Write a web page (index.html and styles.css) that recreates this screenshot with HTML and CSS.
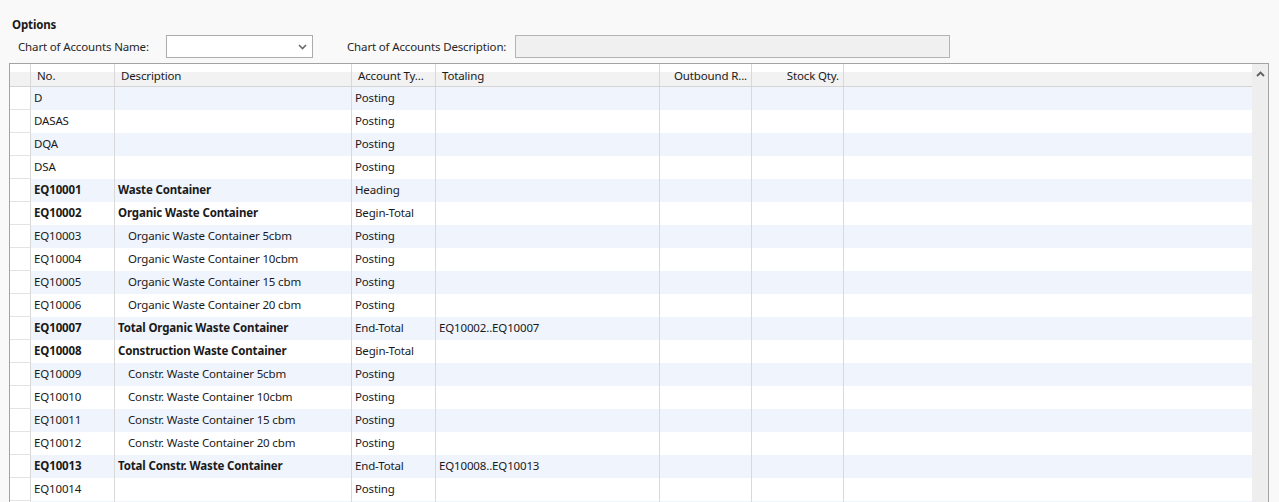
FILE: index.html
```html
<!DOCTYPE html>
<html>
<head>
<meta charset="utf-8">
<link rel="stylesheet" href="styles.css">
</head>
<body>
<div class="options">
  <div class="title">Options</div>
  <div class="form">
    <span class="lbl lbl-name">Chart of Accounts Name:</span>
    <div class="combo"><svg width="9" height="6" viewBox="0 0 9 6"><path d="M1 1 L4.5 4.5 L8 1" fill="none" stroke="#6a6a6a" stroke-width="1.6"/></svg></div>
    <span class="lbl lbl-desc">Chart of Accounts Description:</span>
    <div class="textbox"></div>
  </div>
</div>
<div class="grid">
  <div class="table">
    <div class="row head">
      <div class="cell sel"></div>
      <div class="cell">No.</div>
      <div class="cell">Description</div>
      <div class="cell">Account Ty...</div>
      <div class="cell">Totaling</div>
      <div class="cell num">Outbound R...</div>
      <div class="cell num">Stock Qty.</div>
      <div class="cell last"></div>
    </div>
    <div class="row alt"><div class="cell sel"></div><div class="cell">D</div><div class="cell"></div><div class="cell">Posting</div><div class="cell"></div><div class="cell"></div><div class="cell"></div><div class="cell last"></div></div>
    <div class="row"><div class="cell sel"></div><div class="cell">DASAS</div><div class="cell"></div><div class="cell">Posting</div><div class="cell"></div><div class="cell"></div><div class="cell"></div><div class="cell last"></div></div>
    <div class="row alt"><div class="cell sel"></div><div class="cell">DQA</div><div class="cell"></div><div class="cell">Posting</div><div class="cell"></div><div class="cell"></div><div class="cell"></div><div class="cell last"></div></div>
    <div class="row"><div class="cell sel"></div><div class="cell">DSA</div><div class="cell"></div><div class="cell">Posting</div><div class="cell"></div><div class="cell"></div><div class="cell"></div><div class="cell last"></div></div>
    <div class="row alt bold"><div class="cell sel"></div><div class="cell">EQ10001</div><div class="cell">Waste Container</div><div class="cell">Heading</div><div class="cell"></div><div class="cell"></div><div class="cell"></div><div class="cell last"></div></div>
    <div class="row bold"><div class="cell sel"></div><div class="cell">EQ10002</div><div class="cell">Organic Waste Container</div><div class="cell">Begin-Total</div><div class="cell"></div><div class="cell"></div><div class="cell"></div><div class="cell last"></div></div>
    <div class="row alt"><div class="cell sel"></div><div class="cell">EQ10003</div><div class="cell indent">Organic Waste Container 5cbm</div><div class="cell">Posting</div><div class="cell"></div><div class="cell"></div><div class="cell"></div><div class="cell last"></div></div>
    <div class="row"><div class="cell sel"></div><div class="cell">EQ10004</div><div class="cell indent">Organic Waste Container 10cbm</div><div class="cell">Posting</div><div class="cell"></div><div class="cell"></div><div class="cell"></div><div class="cell last"></div></div>
    <div class="row alt"><div class="cell sel"></div><div class="cell">EQ10005</div><div class="cell indent">Organic Waste Container 15 cbm</div><div class="cell">Posting</div><div class="cell"></div><div class="cell"></div><div class="cell"></div><div class="cell last"></div></div>
    <div class="row"><div class="cell sel"></div><div class="cell">EQ10006</div><div class="cell indent">Organic Waste Container 20 cbm</div><div class="cell">Posting</div><div class="cell"></div><div class="cell"></div><div class="cell"></div><div class="cell last"></div></div>
    <div class="row alt bold"><div class="cell sel"></div><div class="cell">EQ10007</div><div class="cell">Total Organic Waste Container</div><div class="cell">End-Total</div><div class="cell">EQ10002..EQ10007</div><div class="cell"></div><div class="cell"></div><div class="cell last"></div></div>
    <div class="row bold"><div class="cell sel"></div><div class="cell">EQ10008</div><div class="cell">Construction Waste Container</div><div class="cell">Begin-Total</div><div class="cell"></div><div class="cell"></div><div class="cell"></div><div class="cell last"></div></div>
    <div class="row alt"><div class="cell sel"></div><div class="cell">EQ10009</div><div class="cell indent">Constr. Waste Container 5cbm</div><div class="cell">Posting</div><div class="cell"></div><div class="cell"></div><div class="cell"></div><div class="cell last"></div></div>
    <div class="row"><div class="cell sel"></div><div class="cell">EQ10010</div><div class="cell indent">Constr. Waste Container 10cbm</div><div class="cell">Posting</div><div class="cell"></div><div class="cell"></div><div class="cell"></div><div class="cell last"></div></div>
    <div class="row alt"><div class="cell sel"></div><div class="cell">EQ10011</div><div class="cell indent">Constr. Waste Container 15 cbm</div><div class="cell">Posting</div><div class="cell"></div><div class="cell"></div><div class="cell"></div><div class="cell last"></div></div>
    <div class="row"><div class="cell sel"></div><div class="cell">EQ10012</div><div class="cell indent">Constr. Waste Container 20 cbm</div><div class="cell">Posting</div><div class="cell"></div><div class="cell"></div><div class="cell"></div><div class="cell last"></div></div>
    <div class="row alt bold"><div class="cell sel"></div><div class="cell">EQ10013</div><div class="cell">Total Constr. Waste Container</div><div class="cell">End-Total</div><div class="cell">EQ10008..EQ10013</div><div class="cell"></div><div class="cell"></div><div class="cell last"></div></div>
    <div class="row"><div class="cell sel"></div><div class="cell">EQ10014</div><div class="cell"></div><div class="cell">Posting</div><div class="cell"></div><div class="cell"></div><div class="cell"></div><div class="cell last"></div></div>
    <div class="row alt"><div class="cell sel"></div><div class="cell"></div><div class="cell"></div><div class="cell"></div><div class="cell"></div><div class="cell"></div><div class="cell"></div><div class="cell last"></div></div>
  </div>
  <div class="scrollbar"><svg width="9" height="6" viewBox="0 0 9 6"><path d="M1 5 L4.5 1.5 L8 5" fill="none" stroke="#5f5f5f" stroke-width="1.8"/></svg></div>
</div>
</body>
</html>
```

FILE: styles.css
```css
html, body {
  margin: 0;
  padding: 0;
}
body {
  background: #f9f9f9;
  font-family: "Noto Sans", "Open Sans", sans-serif;
  font-size: 11.5px;
  letter-spacing: -0.15px;
  color: #1a1a1a;
  overflow: hidden;
}
.options {
  padding: 17px 0 0 12px;
}
.title {
  font-weight: bold;
  line-height: 15px;
  height: 15px;
}
.form {
  display: flex;
  align-items: center;
  height: 23px;
  margin-top: 3px;
  padding-left: 6px;
}
.lbl {
  white-space: nowrap;
  color: #262626;
}
.lbl-name {
  width: 148px;
}
.combo {
  width: 147px;
  height: 23px;
  box-sizing: border-box;
  border: 1px solid #acacac;
  background: #fff;
  display: flex;
  align-items: center;
  justify-content: flex-end;
  padding-right: 5px;
}
.lbl-desc {
  margin-left: 34px;
  width: 168px;
}
.textbox {
  width: 435px;
  height: 23px;
  box-sizing: border-box;
  border: 1px solid #b4b4b4;
  background: #f0f0f0;
}
.grid {
  margin: 5px 0 0 9px;
  width: 1260px;
  box-sizing: border-box;
  border: 1px solid #a3a3a3;
  display: flex;
}
.table {
  width: 1242px;
}
.row {
  display: grid;
  grid-template-columns: 21px 84px 237px 84px 224px 92px 92px 408px;
  height: 23px;
  background: #fff;
}
.row.alt {
  background: #eff4fd;
}
.row.head {
  background: linear-gradient(#ffffff 0, #ffffff 8px, #f2f2f2 8px);
  border-bottom: 1px solid #d4d4d4;
  height: 22px;
}
.cell {
  box-sizing: border-box;
  border-right: 1px solid #d9d9d9;
  padding: 0 3px;
  line-height: 22px;
  white-space: nowrap;
  overflow: hidden;
}
.head .cell {
  line-height: 23px;
  padding-left: 6px;
}
.head .cell.num {
  text-align: right;
  padding-right: 4px;
}
.cell.last {
  border-right: none;
}
.cell.sel {
  background: #fff;
  border-bottom: 1px solid #e3e3e3;
}
.head .cell.sel {
  background: transparent;
  border-bottom: none;
}
.bold .cell {
  font-weight: bold;
}
.bold .cell:nth-child(4),
.bold .cell:nth-child(5) {
  font-weight: normal;
}
.cell.indent {
  padding-left: 13px;
}
.scrollbar {
  width: 16px;
  background: #eeeeee;
  display: flex;
  justify-content: center;
  align-items: flex-start;
  padding-top: 7px;
  box-sizing: border-box;
}
```
